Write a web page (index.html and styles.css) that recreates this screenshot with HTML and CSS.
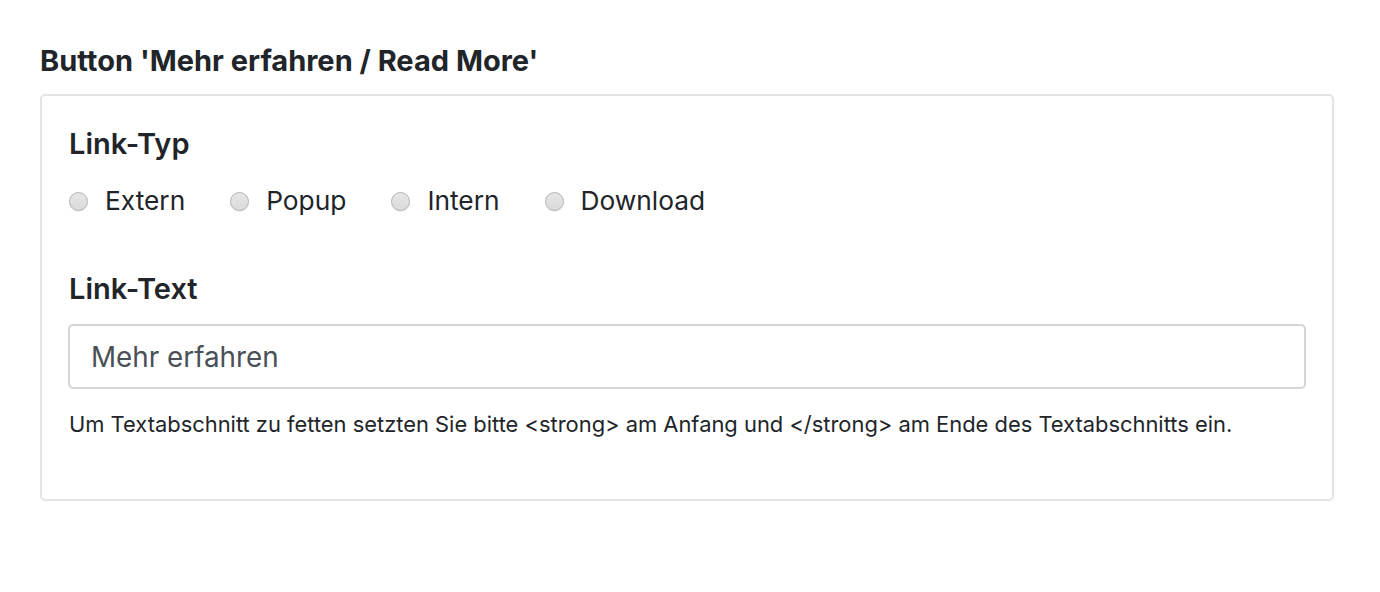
FILE: index.html
```html
<!DOCTYPE html>
<html lang="de">
<head>
<meta charset="utf-8">
<title>Button</title>
<link rel="stylesheet" href="styles.css">
</head>
<body>
<div class="page">
  <h2 class="section-title">Button 'Mehr erfahren / Read More'</h2>
  <div class="card">
    <div class="group">
      <div class="label">Link-Typ</div>
      <div class="radios">
        <label class="radio"><span class="dot"></span><span class="radio-text">Extern</span></label>
        <label class="radio"><span class="dot"></span><span class="radio-text">Popup</span></label>
        <label class="radio"><span class="dot"></span><span class="radio-text">Intern</span></label>
        <label class="radio"><span class="dot"></span><span class="radio-text">Download</span></label>
      </div>
    </div>
    <div class="group group-text">
      <div class="label">Link-Text</div>
      <div class="input">Mehr erfahren</div>
      <p class="help">Um Textabschnitt zu fetten setzten Sie bitte &lt;strong&gt; am Anfang und &lt;/strong&gt; am Ende des Textabschnitts ein.</p>
    </div>
  </div>
</div>
</body>
</html>
```

FILE: styles.css
```css
html, body {
  margin: 0;
  padding: 0;
  background: #ffffff;
}
body {
  font-family: Inter, "Noto Sans", "Liberation Sans", sans-serif;
  color: #212529;
}
.page {
  padding: 43px 46px 0 40px;
}
.section-title {
  margin: 0 0 15px 0;
  font-size: 29px;
  line-height: 36px;
  font-weight: 700;
}
.card {
  border: 2px solid #e4e4e4;
  border-radius: 5px;
  padding: 30px 26px 60px 26px;
}
.label {
  font-size: 29px;
  line-height: 36px;
  font-weight: 600;
  padding-left: 1px;
}
.radios {
  display: flex;
  align-items: center;
  margin-top: 23px;
  gap: 44px;
}
.radio {
  display: flex;
  align-items: center;
  gap: 17px;
  font-size: 26.3px;
  line-height: 32px;
}
.dot {
  box-sizing: border-box;
  width: 19px;
  height: 19px;
  margin-left: 1px;
  border-radius: 50%;
  border: 1px solid #b3b3b3;
  background: linear-gradient(#e6e6e6, #dadada);
  box-shadow: 0 1px 1px rgba(0,0,0,0.08);
}
.group-text {
  margin-top: 54px;
}
.input {
  box-sizing: border-box;
  margin-top: 17px;
  height: 65px;
  border: 2px solid #d3d6d9;
  border-radius: 5px;
  padding: 0 21px;
  display: flex;
  align-items: center;
  font-size: 27.8px;
  color: #495057;
}
.help {
  margin: 20px 0 0 1px;
  font-size: 21.9px;
  line-height: 30px;
}
```
